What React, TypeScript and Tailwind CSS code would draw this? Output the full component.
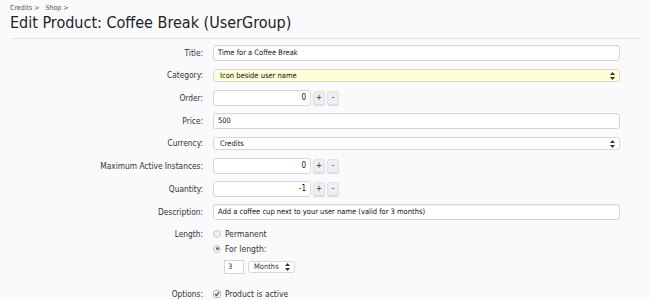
import React from "react";

const font = { fontFamily: '"DejaVu Sans Condensed", "DejaVu Sans", sans-serif' };

function Label({ children }: { children: React.ReactNode }) {
  return <div className="w-[203px] shrink-0 text-right text-[8.3px] text-[#333]">{children}</div>;
}

function Row({ label, children }: { label: string; children: React.ReactNode }) {
  return (
    <div className="flex items-center gap-[10px] h-[22.7px]">
      <Label>{label}</Label>
      <div className="flex-1 flex items-center">{children}</div>
    </div>
  );
}

function TextInput({ value, className = "" }: { value: string; className?: string }) {
  return (
    <div className={`h-[16px] border border-[#d4d6da] rounded-[3px] bg-white flex items-center px-[4px] text-[7.5px] text-[#111] shadow-[inset_0_1px_1px_rgba(0,0,0,0.05)] ${className}`}>
      {value}
    </div>
  );
}

function Arrows() {
  return (
    <svg width="5" height="8" viewBox="0 0 5 8" className="shrink-0">
      <path d="M2.5 0 L5 3 L0 3 Z" fill="#333" />
      <path d="M2.5 8 L5 5 L0 5 Z" fill="#333" />
    </svg>
  );
}

function Select({ value, yellow = false }: { value: string; yellow?: boolean }) {
  return (
    <div className={`w-[407px] h-[13px] border border-[#d8d8d8] rounded-[3px] flex items-center justify-between pl-[6px] pr-[4px] text-[7.5px] text-[#111] ${yellow ? "bg-[#fdfdd8]" : "bg-white"}`}>
      <span>{value}</span>
      <Arrows />
    </div>
  );
}

function Btn({ children }: { children: React.ReactNode }) {
  return (
    <div className="w-[12px] h-[14px] rounded-[3px] bg-[#eceef2] border border-[#e0e2e6] shadow-[0_1px_1px_rgba(0,0,0,0.15)] flex items-center justify-center text-[8px] text-[#333] leading-none">
      {children}
    </div>
  );
}

function Spinner({ value }: { value: string }) {
  return (
    <div className="flex items-center gap-[2px]">
      <div className="w-[98px] h-[16px] border border-[#d4d6da] rounded-[3px] bg-white flex items-center justify-end pr-[4px] text-[8px] text-[#111]">
        {value}
      </div>
      <Btn>+</Btn>
      <Btn>-</Btn>
    </div>
  );
}

function Radio({ checked }: { checked?: boolean }) {
  return (
    <div className="w-[8px] h-[8px] rounded-full border border-[#c8c8c8] bg-[#f0f0f0] flex items-center justify-center shrink-0">
      {checked && <div className="w-[3px] h-[3px] rounded-full bg-[#666]" />}
    </div>
  );
}

export default function App() {
  return (
    <div className="w-[650px] h-[300px] bg-[#fafafc] overflow-hidden" style={font}>
      <div className="pl-[10px] pt-[3px] h-[13px] leading-[10px] text-[7px] text-[#555] flex gap-[6px]">
        <span>Credits &gt;</span>
        <span>Shop &gt;</span>
      </div>
      <div className="pl-[10px] text-[16px] leading-[20px] h-[20px] text-[#222]">Edit Product: Coffee Break (UserGroup)</div>
      <div className="ml-[12px] mr-[10px] mt-[5px] border-t border-[#dde4ec]" />
      <div className="pt-[2.6px]">
        <Row label="Title:"><TextInput value="Time for a Coffee Break" className="w-[407px]" /></Row>
        <Row label="Category:"><Select value="Icon beside user name" yellow /></Row>
        <Row label="Order:"><Spinner value="0" /></Row>
        <Row label="Price:"><TextInput value="500" className="w-[407px]" /></Row>
        <Row label="Currency:"><Select value="Credits" /></Row>
        <Row label="Maximum Active Instances:"><Spinner value="0" /></Row>
        <Row label="Quantity:"><Spinner value="-1" /></Row>
        <Row label="Description:"><TextInput value="Add a coffee cup next to your user name (valid for 3 months)" className="w-[407px]" /></Row>
        <div className="flex gap-[10px] mt-[3.3px]">
          <div className="h-[15px] flex items-center"><Label>Length:</Label></div>
          <div className="flex flex-col text-[8.5px] text-[#333]">
            <div className="flex items-center gap-[4px] h-[15px]"><Radio /><span>Permanent</span></div>
            <div className="flex items-center gap-[4px] h-[15px]"><Radio checked /><span>For length:</span></div>
            <div className="flex items-center gap-[4px] pl-[11px] mt-[3.5px]">
              <div className="w-[20px] h-[14px] border border-[#d4d6da] bg-white text-[7.5px] flex items-center pl-[3px]">3</div>
              <div className="w-[47px] h-[12px] border border-[#d8d8d8] rounded-[3px] bg-white flex items-center justify-between pl-[5px] pr-[4px] text-[7.5px]">
                <span>Months</span>
                <Arrows />
              </div>
            </div>
          </div>
        </div>
        <div className="flex gap-[10px] mt-[13px] items-center h-[14px]">
          <Label>Options:</Label>
          <div className="flex items-center gap-[4px] text-[8.5px] text-[#333]">
            <div className="w-[8px] h-[8px] rounded-[2px] border border-[#bbb] bg-[#f0f0f0] flex items-center justify-center">
              <svg width="6" height="6" viewBox="0 0 6 6"><path d="M1 3 L2.5 4.5 L5 1" stroke="#444" strokeWidth="1.2" fill="none" /></svg>
            </div>
            <span>Product is active</span>
          </div>
        </div>
      </div>
    </div>
  );
}
